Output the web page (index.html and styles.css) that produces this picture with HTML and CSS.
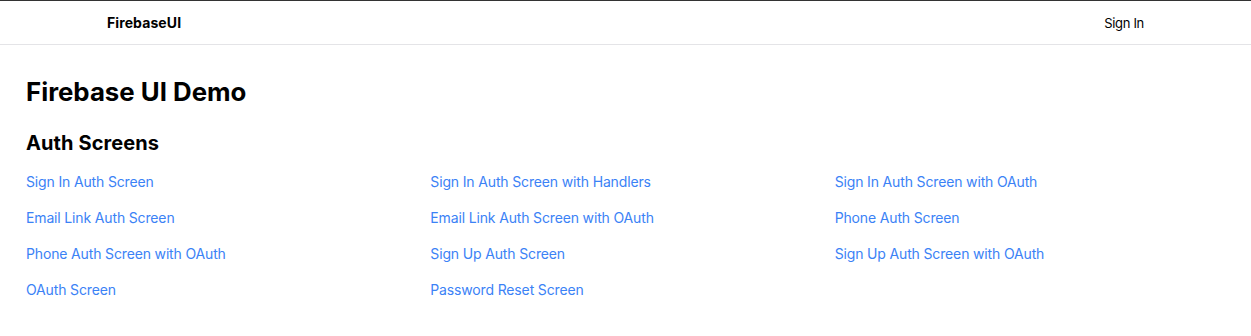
FILE: index.html
```html
<!DOCTYPE html>
<html lang="en">
<head>
    <meta charset="UTF-8">
    <meta name="viewport" content="width=device-width, initial-scale=1.0">
    <title>Firebase UI Demo</title>
    <link rel="stylesheet" href="styles.css">
</head>
<body>
    <header class="top-bar">
        <div class="top-bar-inner">
            <a href="#" class="brand">FirebaseUI</a>
            <a href="#" class="nav-link">Sign In</a>
        </div>
    </header>

    <main class="page">
        <h1>Firebase UI Demo</h1>
        <h2>Auth Screens</h2>
        <ul class="screen-list">
            <li><a href="#">Sign In Auth Screen</a></li>
            <li><a href="#">Sign In Auth Screen with Handlers</a></li>
            <li><a href="#">Sign In Auth Screen with OAuth</a></li>
            <li><a href="#">Email Link Auth Screen</a></li>
            <li><a href="#">Email Link Auth Screen with OAuth</a></li>
            <li><a href="#">Phone Auth Screen</a></li>
            <li><a href="#">Phone Auth Screen with OAuth</a></li>
            <li><a href="#">Sign Up Auth Screen</a></li>
            <li><a href="#">Sign Up Auth Screen with OAuth</a></li>
            <li><a href="#">OAuth Screen</a></li>
            <li><a href="#">Password Reset Screen</a></li>
        </ul>
    </main>
</body>
</html>
```

FILE: styles.css
```css
* {
    box-sizing: border-box;
}

body {
    margin: 0;
    font-family: Inter, 'Noto Sans', sans-serif;
    background-color: #ffffff;
    color: #000;
    border-top: 1px solid #333;
}

a {
    text-decoration: none;
}

/* Top navigation */
.top-bar {
    border-bottom: 1px solid #e4e4e7;
}

.top-bar-inner {
    display: flex;
    justify-content: space-between;
    align-items: center;
    height: 43px;
    padding: 0 107px;
}

.brand {
    color: #000;
    font-weight: 700;
    font-size: 14px;
    letter-spacing: 0.1px;
}

.nav-link {
    color: #000;
    font-size: 13px;
    letter-spacing: -0.3px;
}

/* Page content */
.page {
    padding: 0 26px;
}

h1 {
    font-size: 25.8px;
    font-weight: 700;
    margin: 31px 0 0;
    line-height: 32px;
}

h2 {
    font-size: 20px;
    font-weight: 700;
    margin: 21px 0 0;
    line-height: 28px;
    letter-spacing: 0.1px;
}

.screen-list {
    list-style: none;
    margin: 15px 0 0;
    padding: 0;
    display: grid;
    grid-template-columns: repeat(3, 1fr);
    column-gap: 14px;
    row-gap: 16px;
}

.screen-list li {
    font-size: 14px;
    line-height: 20px;
}

.screen-list a {
    color: #3b82f6;
    letter-spacing: -0.15px;
}
```
